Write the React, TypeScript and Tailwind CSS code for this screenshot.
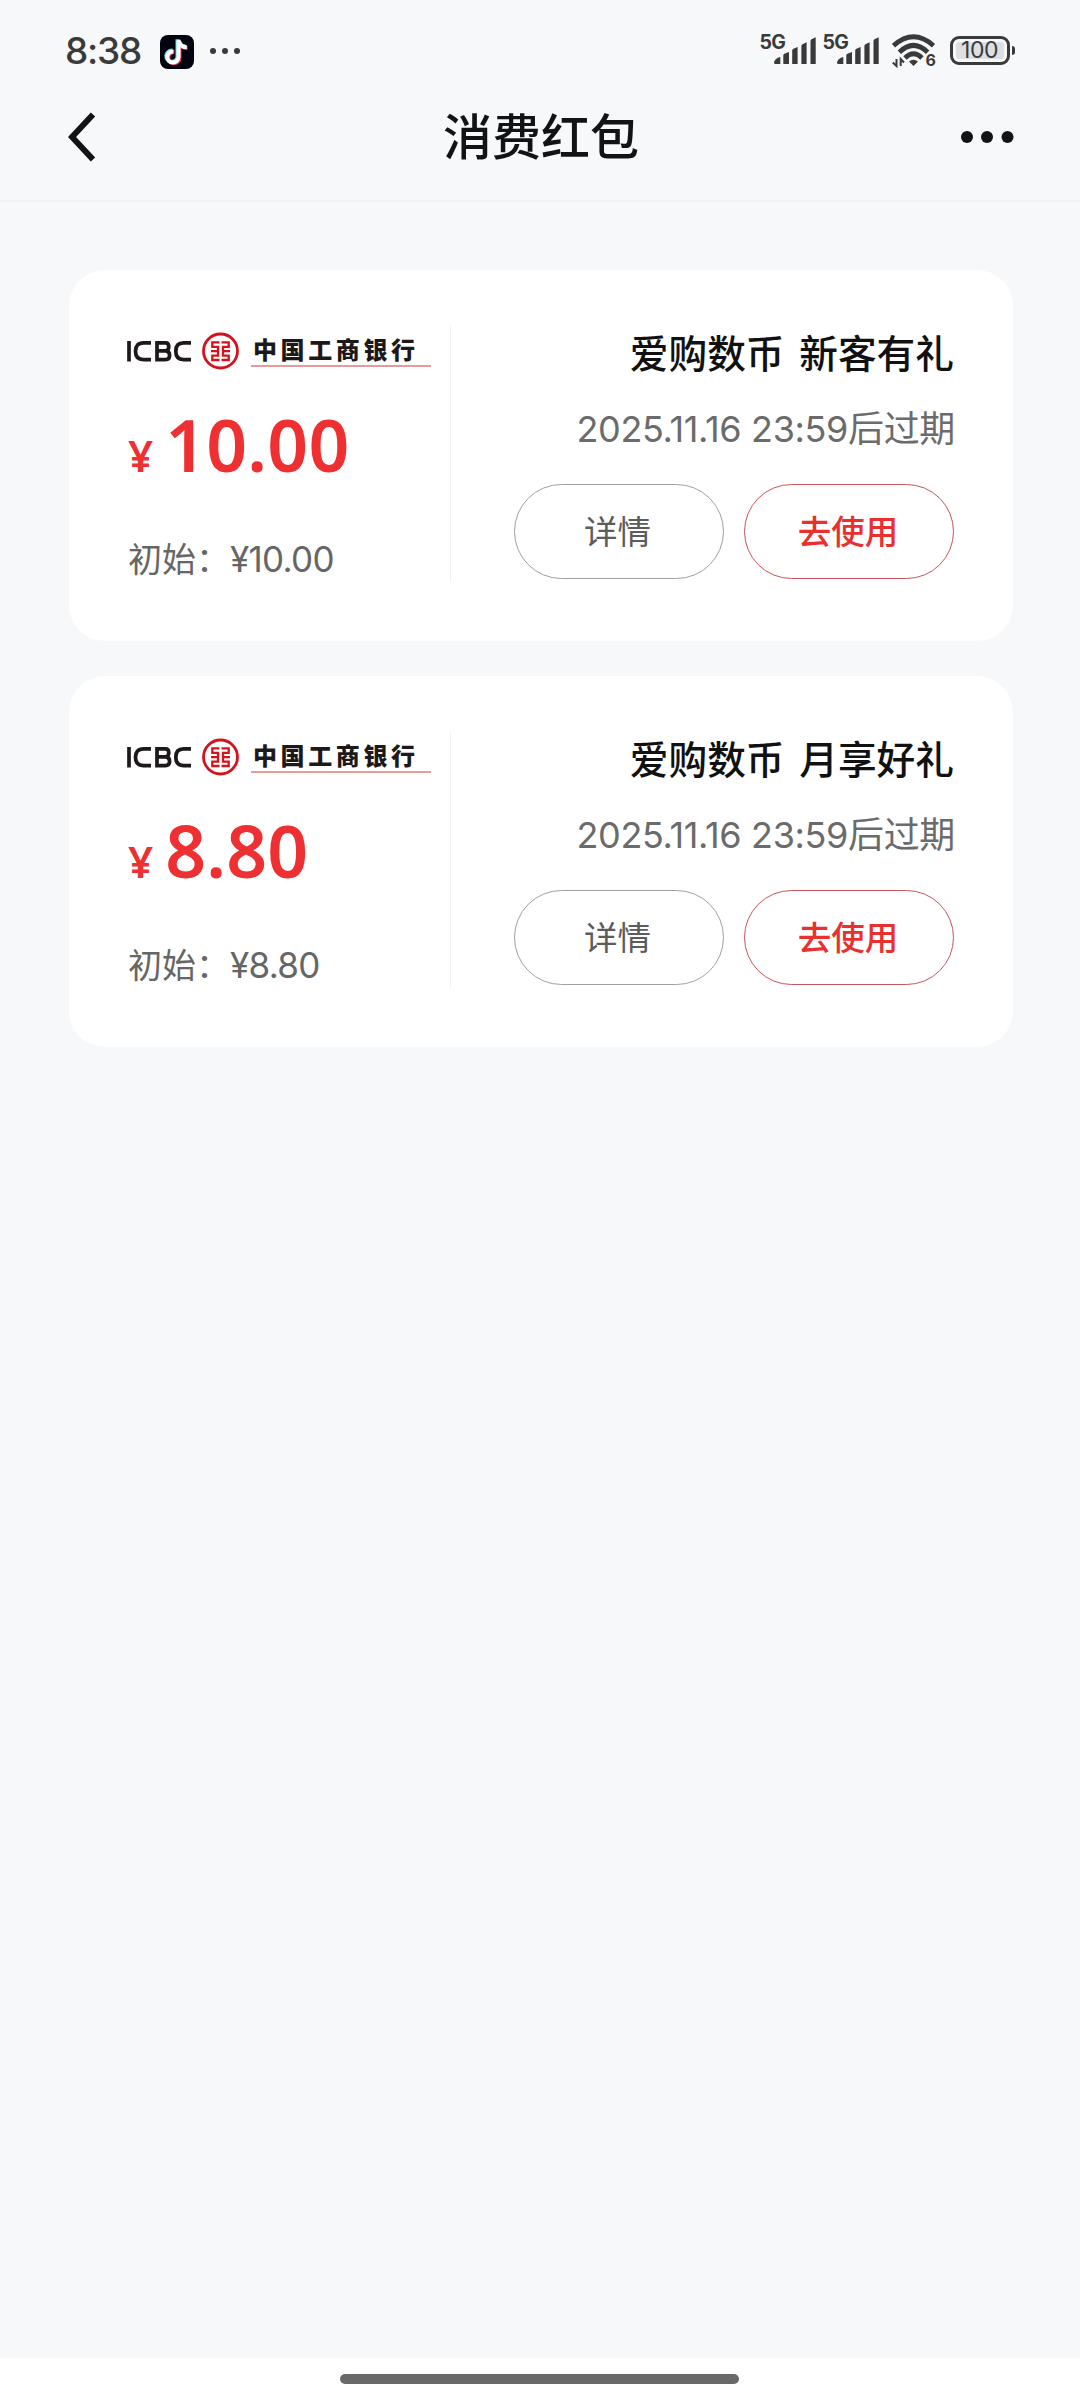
import React from "react";

const coupons = [
  { amount: "10.00", title: "爱购数币 新客有礼" },
  { amount: "8.80", title: "爱购数币 月享好礼" },
];

function Signal() {
  return (
    <div className="flex h-[30px] w-[57px] items-start">
      <span className="w-[26px] font-['Inter'] text-[19.500px] leading-[16px] font-bold tracking-[-0.800px]">5G</span>
      <svg className="-ml-[12px] h-[30px] w-[43px] shrink-0" viewBox="0 0 43 30" fill="#3a3a3a">
        <path d="M0 28.5Q1 24 6.3 23V30H1.500Q0 30 0 28.500Z" />
        <path d="M9.300 21.500Q9.300 20 11 19.400L15 18V30H9.300Z" />
        <path d="M18.200 16.500Q18.200 15 20 14.400L23.600 13V30H18.200Z" />
        <path d="M27.400 12Q27.400 10.500 29 9.900L32.600 8.300V30H27.400Z" />
        <path d="M36.500 7Q36.500 5.500 38 4.900L41.700 3.300V30H36.500Z" />
      </svg>
    </div>
  );
}

function StatusBar() {
  return (
    <div className="flex h-[90px] shrink-0 items-start pl-[65px] pr-[65px] text-[#3a3a3a]">
      <span className="mt-[31px] w-[76px] font-['Inter'] text-[37px] leading-[40px] font-medium tracking-[-1.2px]">8:38</span>
      <svg className="mt-[35px] ml-[19px] h-[34px] w-[34px]" viewBox="0 0 34 34">
        <rect width="34" height="34" rx="8" fill="#03040f" />
        <g fill="none" strokeWidth="4">
          <path d="M17.500 4.300V21.200A5.600 5.600 0 1 1 12.300 15.600M17.500 4.300C18.300 9 21 11.500 25.500 11.600" stroke="#4fe3df" />
          <path d="M19.500 6.100V22.700A5.600 5.600 0 1 1 14.300 17.100M19.500 6.100C20.300 10.500 23.500 13 27.500 13.100" stroke="#f5335c" />
          <path d="M18.500 5.200V22A5.600 5.600 0 1 1 13.300 16.400M18.500 5.200C19.300 9.700 22.500 12.200 26.800 12.300" stroke="#fff" />
        </g>
      </svg>
      <svg className="mt-[48px] ml-[16px] h-[6px] w-[30px]" viewBox="0 0 30 6" fill="#3a3a3a">
        <circle cx="3" cy="3" r="3" /><circle cx="15" cy="3" r="3" /><circle cx="27" cy="3" r="3" />
      </svg>
      <div className="mt-[34px] ml-auto flex items-start">
        <Signal />
        <div className="ml-[6px]"><Signal /></div>
        <div className="relative ml-[12px] h-[34px] w-[44px]">
          <svg className="h-[34px] w-[44px]" viewBox="0 0 44 34" fill="none" stroke="#3a3a3a" strokeWidth="4.800">
            <path d="M1.500 11.700Q21.500 -6 41.500 11.700" />
            <path d="M7.300 18.200Q21.500 4.600 35.700 18.200" />
            <path d="M13 24Q21.500 15.500 30 24" />
            <path d="M17 27.500Q21.500 24 26 27.500L21.500 32Z" fill="#3a3a3a" stroke="none" />
            <path d="M4.500 25V32L0.800 28.500M8.700 32V25L12 28.500" strokeWidth="2" />
          </svg>
          <span className="absolute top-[18px] left-[34px] font-['Inter'] text-[16px] leading-[16px] font-bold">6</span>
        </div>
        <div className="mt-[2px] ml-[14px] flex items-center">
          <div className="flex h-[29px] w-[60px] rounded-[9px] border-[3px] border-[#3a3a3a] p-[3px]">
            <div className="flex flex-1 items-center justify-center rounded-[3px] bg-[#dedfe0] font-['Inter'] text-[23px] leading-none tracking-[-0.5px]">100</div>
          </div>
          <div className="ml-[2px] h-[9px] w-[3.500px] rounded-r-[3px] bg-[#3a3a3a]" />
        </div>
      </div>
    </div>
  );
}

function Header() {
  return (
    <div className="flex h-[112px] shrink-0 items-start justify-between border-b-2 border-[#f1f2f4] pl-[68px] pr-[66px]">
      <svg className="mt-[22px] h-[50px] w-[53px]" viewBox="0 0 53 50" fill="none" stroke="#111314" strokeWidth="6">
        <path d="M25 2.500L4 25L25 47.500" />
      </svg>
      <h1 className="mt-[14px] text-[49px] leading-[60px] font-medium text-[#111314]">消费红包</h1>
      <svg className="mt-[41px] h-[12px] w-[53px]" viewBox="0 0 53 12" fill="#111314">
        <circle cx="6" cy="6" r="6" /><circle cx="26" cy="6" r="6" /><circle cx="46.500" cy="6" r="6" />
      </svg>
    </div>
  );
}

function BankLogo() {
  return (
    <div className="flex h-[40px] items-start">
      <svg className="mt-[9px] h-[21px] w-[64px]" viewBox="0 0 64 21" fill="none" stroke="#1d191a" strokeWidth="3.700">
        <path d="M2 0V20.500" />
        <path d="M24 1.900H16.500Q8.500 1.900 8.500 10.200T16.500 18.600H24" />
        <path d="M30 0.200V20.500M28.200 1.900H38.500Q41.800 1.900 41.800 5.800T38.500 9.800H30M38.500 9.800Q42.600 9.800 42.600 14.200T38.500 18.600H28.200" />
        <path d="M64 1.900H56.500Q48.800 1.900 48.800 10.200T56.500 18.600H64" />
      </svg>
      <svg className="ml-[11px] h-[38px] w-[37px]" viewBox="0 0 37 38" fill="none" stroke="#d3141f">
        <circle cx="18.500" cy="19" r="17" strokeWidth="2.800" />
        <path d="M17.500 10.300H10.300V14.800H16V19.200H9M16 19.200V23.600H10.300V28H17.500M19.500 10.300H26.700V14.800H21V19.200H28M21 19.200V23.600H26.700V28H19.500" strokeWidth="2.300" />
      </svg>
      <div className="ml-[12px] w-[180px] border-b-2 border-[#e79a9c]">
        <div className="h-[33px] pt-[3px] pl-[2px] text-[24px] leading-[28px] font-black tracking-[3.600px] whitespace-nowrap text-[#1d191a]">中国工商银行</div>
      </div>
    </div>
  );
}

function Card({ amount, title }: { amount: string; title: string }) {
  return (
    <section className="flex h-[371px] rounded-[36px] bg-white pt-[56px]">
      <div className="h-[256px] w-[382px] border-r border-[#f1f2f3] pt-[6px] pl-[58px]">
        <BankLogo />
        <div className="mt-[33px] flex h-[80px] items-baseline font-['Noto_Sans'] font-semibold text-[#ee3032]">
          <span className="pl-[1px] text-[44px] leading-[80px]">¥</span>
          <span className="ml-[12px] text-[71.500px] leading-[80px] tracking-[0.200px]">{amount}</span>
        </div>
        <div className="mt-[49px] flex items-baseline pl-[1px] text-[34px] leading-[48px] text-[#666]">
          <span>初始：</span>
          <span className="font-['Inter'] text-[35px] tracking-[-0.700px]">¥{amount}</span>
        </div>
      </div>
      <div className="flex flex-1 flex-col items-end pr-[59px]">
        <h2 className="-mt-[3px] text-[38.700px] leading-[56px] font-medium [word-spacing:6px] text-[#111]">{title}</h2>
        <p className="mt-[24px] -mr-[1px] font-['Inter','Noto_Sans_CJK_SC',sans-serif] text-[36px] leading-[52px] tracking-[-0.350px] text-[#6b6b6b]">2025.11.16 23:59后过期</p>
        <div className="mt-[29px] flex gap-[20px] text-[33.500px]">
          <button className="h-[95px] w-[210px] rounded-full border border-[#a0a0a0] pr-[3px] pb-[3px] text-[#5c5c5c]">详情</button>
          <button className="h-[95px] w-[210px] rounded-full border border-[#c9545a] pr-[2px] pb-[3px] font-medium text-[#e8302f]">去使用</button>
        </div>
      </div>
    </section>
  );
}

export default function App() {
  return (
    <div className="flex h-[2400px] w-[1080px] flex-col bg-[#f6f8fa] font-['Noto_Sans_CJK_SC',sans-serif]">
      <StatusBar />
      <Header />
      <main className="flex flex-1 flex-col gap-[35px] pt-[68px] pr-[67px] pl-[69px]">
        {coupons.map((c) => <Card key={c.amount} {...c} />)}
      </main>
      <footer className="flex h-[42px] shrink-0 justify-center bg-white pt-[16px] pr-[2px]">
        <div className="h-[10px] w-[399px] rounded-full bg-[#696969]" />
      </footer>
    </div>
  );
}
